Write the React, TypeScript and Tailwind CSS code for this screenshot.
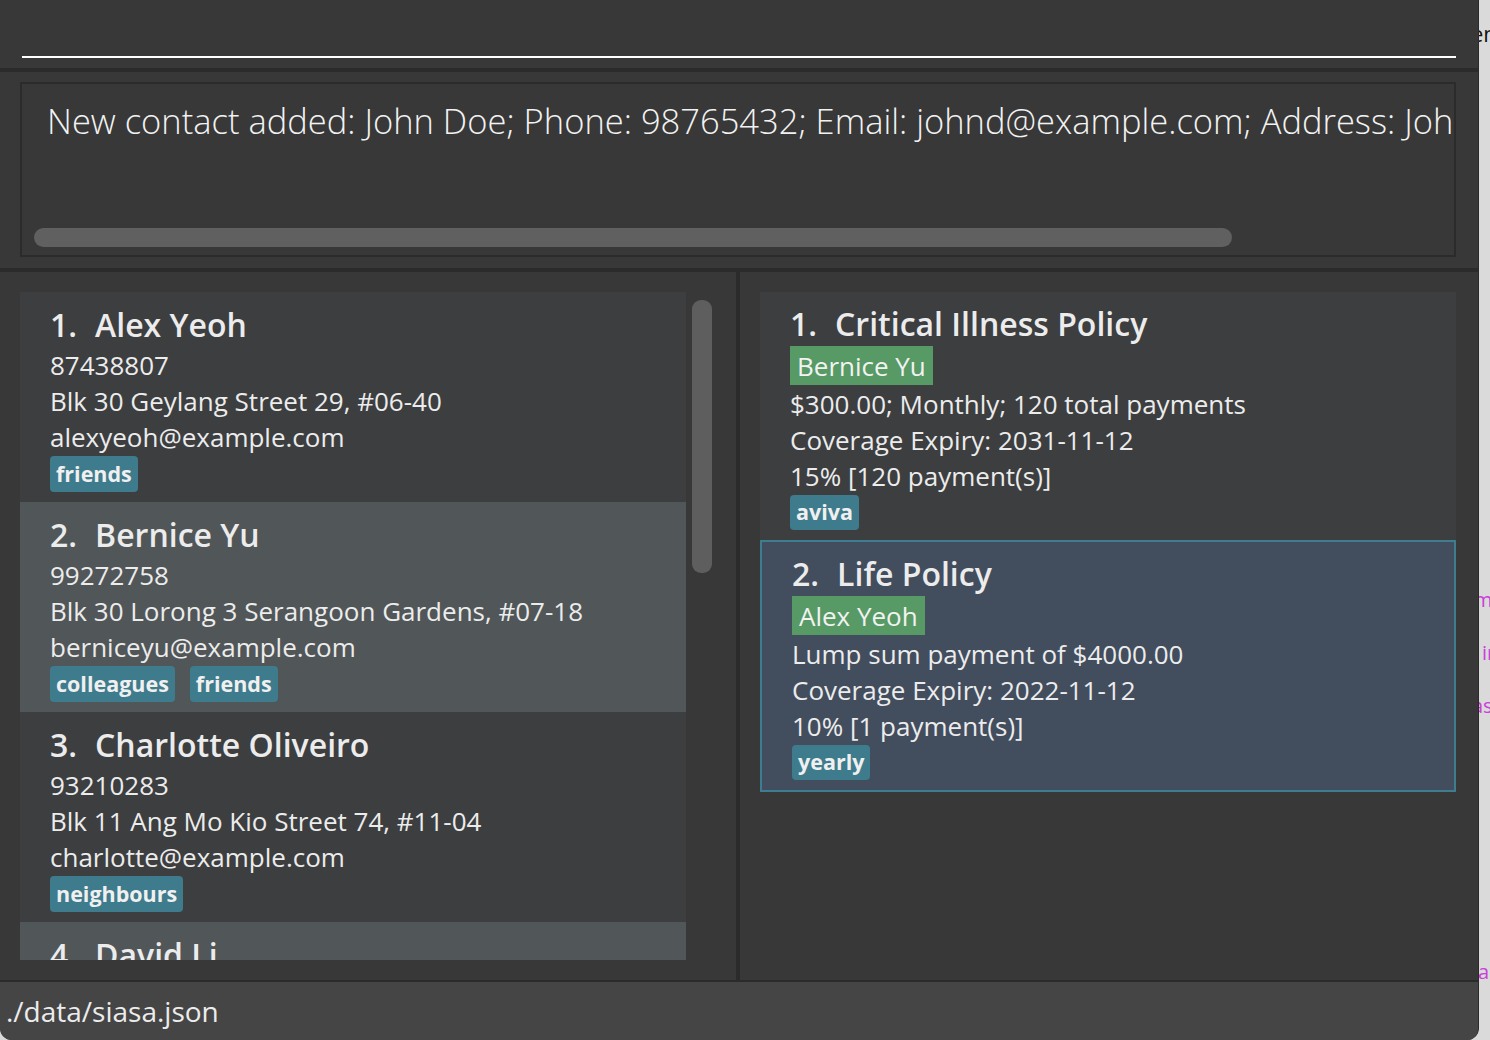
import React from "react";

type Person = { name: string; phone: string; address: string; email: string; tags: string[] };

const people: Person[] = [
  { name: "Alex Yeoh", phone: "87438807", address: "Blk 30 Geylang Street 29, #06-40", email: "alexyeoh@example.com", tags: ["friends"] },
  { name: "Bernice Yu", phone: "99272758", address: "Blk 30 Lorong 3 Serangoon Gardens, #07-18", email: "berniceyu@example.com", tags: ["colleagues", "friends"] },
  { name: "Charlotte Oliveiro", phone: "93210283", address: "Blk 11 Ang Mo Kio Street 74, #11-04", email: "charlotte@example.com", tags: ["neighbours"] },
  { name: "David Li", phone: "91031282", address: "Blk 436 Serangoon Gardens Street 26, #16-43", email: "lidavid@example.com", tags: ["family"] },
];

type Policy = { title: string; owner: string; lines: string[]; tag: string };

const policies: Policy[] = [
  { title: "Critical Illness Policy", owner: "Bernice Yu", lines: ["$300.00; Monthly; 120 total payments", "Coverage Expiry: 2031-11-12", "15% [120 payment(s)]"], tag: "aviva" },
  { title: "Life Policy", owner: "Alex Yeoh", lines: ["Lump sum payment of $4000.00", "Coverage Expiry: 2022-11-12", "10% [1 payment(s)]"], tag: "yearly" },
];

function Tag({ label, h }: { label: string; h: string }) {
  return (
    <span className={`bg-[#3e7b8c] text-[#f0f0f0] text-[21.5px] font-bold px-[6px] rounded-[4px] flex items-center ${h}`}>
      {label}
    </span>
  );
}

function PersonCard({ p, i }: { p: Person; i: number }) {
  const bg = i % 2 === 0 ? "bg-[#3c3e40]" : "bg-[#515658]";
  return (
    <div className={`${bg} h-[210px] shrink-0 pt-[11px] pl-[30px] flex flex-col text-[#ececec]`}>
      <div className="text-[32px] font-semibold leading-[44px] whitespace-nowrap flex">
        <span>{i + 1}.</span>
        <span className="ml-[18px]">{p.name}</span>
      </div>
      <div className="text-[26px] leading-[36px] whitespace-nowrap">{p.phone}</div>
      <div className="text-[26px] leading-[36px] whitespace-nowrap">{p.address}</div>
      <div className="text-[26px] leading-[36px] whitespace-nowrap">{p.email}</div>
      <div className="flex gap-[15px] mt-[1px]">
        {p.tags.map((t) => (
          <Tag key={t} label={t} h="h-[36px]" />
        ))}
      </div>
    </div>
  );
}

function PolicyCard({ p, i, selected }: { p: Policy; i: number; selected: boolean }) {
  const cls = selected
    ? "bg-[#424d5e] border-2 border-[#3e7c8f] h-[252px]"
    : "bg-[#3c3e40] h-[248px]";
  return (
    <div className={`${cls} shrink-0 pt-[10px] pl-[30px] flex flex-col text-[#ececec]`}>
      <div className="text-[32px] font-semibold leading-[44px] whitespace-nowrap flex">
        <span>{i + 1}.</span>
        <span className="ml-[18px]">{p.title}</span>
      </div>
      <div className="flex">
        <span className="bg-[#579a65] text-[#f2f2f2] text-[26px] h-[39px] leading-[40px] px-[7px]">{p.owner}</span>
      </div>
      <div className="pt-[1px] flex flex-col">
        {p.lines.map((l) => (
          <div key={l} className="text-[26px] leading-[36px] whitespace-nowrap">{l}</div>
        ))}
      </div>
      <div className="flex mt-[1px]">
        <Tag label={p.tag} h="h-[35px]" />
      </div>
    </div>
  );
}

export default function App() {
  return (
    <div className="w-[1490px] h-[1040px] bg-[#dadada] relative overflow-hidden font-['Open_Sans',sans-serif]">
      {/* background window fragments */}
      <span className="absolute left-[1471px] top-[18px] text-[22px] text-[#111111] leading-[30px]">en</span>
      <span className="absolute left-[1474px] top-[586px] text-[20px] text-[#c940d8] leading-[28px]">m</span>
      <span className="absolute left-[1482px] top-[639px] text-[20px] text-[#c940d8] leading-[28px]">in</span>
      <span className="absolute left-[1472px] top-[692px] text-[20px] text-[#c940d8] leading-[28px]">as</span>
      <span className="absolute left-[1478px] top-[958px] text-[20px] text-[#c940d8] leading-[28px]">a</span>

      <div className="relative z-10 w-[1479px] h-[1040px] bg-[#383838] rounded-b-[12px] overflow-hidden flex flex-col border-r border-[#2b2b2b]">
        {/* command box */}
        <div className="h-[68px] shrink-0 pt-[56px] pl-[22px]">
          <div className="w-[1434px] h-[2px] bg-white" />
        </div>
        <div className="h-[4px] shrink-0 bg-[#2b2b2b]" />

        {/* result display */}
        <div className="h-[196px] shrink-0 pt-[10px] pl-[20px]">
          <div className="relative w-[1436px] h-[175px] border-2 border-[#2b2b2b] overflow-hidden pl-[25px] pt-[14px]">
            <div className="text-[34.5px] font-light leading-[46px] text-[#f2f2f2] whitespace-nowrap">
              New contact added: John Doe; Phone: 98765432; Email: johnd@example.com; Address: John street, block 123, #01-01
            </div>
            <div className="absolute left-[12px] bottom-[8px] w-[1198px] h-[19px] rounded-full bg-[#606060]" />
          </div>
        </div>
        <div className="h-[4px] shrink-0 bg-[#2b2b2b]" />

        {/* lists */}
        <div className="h-[708px] shrink-0 flex">
          <div className="relative w-[736px] pt-[20px] pl-[20px]">
            <div className="w-[666px] h-[668px] overflow-hidden flex flex-col">
              {people.map((p, i) => (
                <PersonCard key={p.name} p={p} i={i} />
              ))}
            </div>
            <div className="absolute left-[692px] top-[28px] w-[20px] h-[273px] rounded-[9px] bg-[#5e5e5e]" />
          </div>
          <div className="w-[4px] bg-[#2b2b2b]" />
          <div className="flex-1 pt-[20px] pl-[20px]">
            <div className="w-[696px] flex flex-col">
              {policies.map((p, i) => (
                <PolicyCard key={p.title} p={p} i={i} selected={i === 1} />
              ))}
            </div>
          </div>
        </div>

        {/* status bar */}
        <div className="h-[2px] shrink-0 bg-[#2b2b2b]" />
        <div className="flex-1 bg-[#454545] pl-[6px] pt-[10px]">
          <div className="text-[28px] leading-[38px] text-[#ececec]">./data/siasa.json</div>
        </div>
      </div>
    </div>
  );
}
